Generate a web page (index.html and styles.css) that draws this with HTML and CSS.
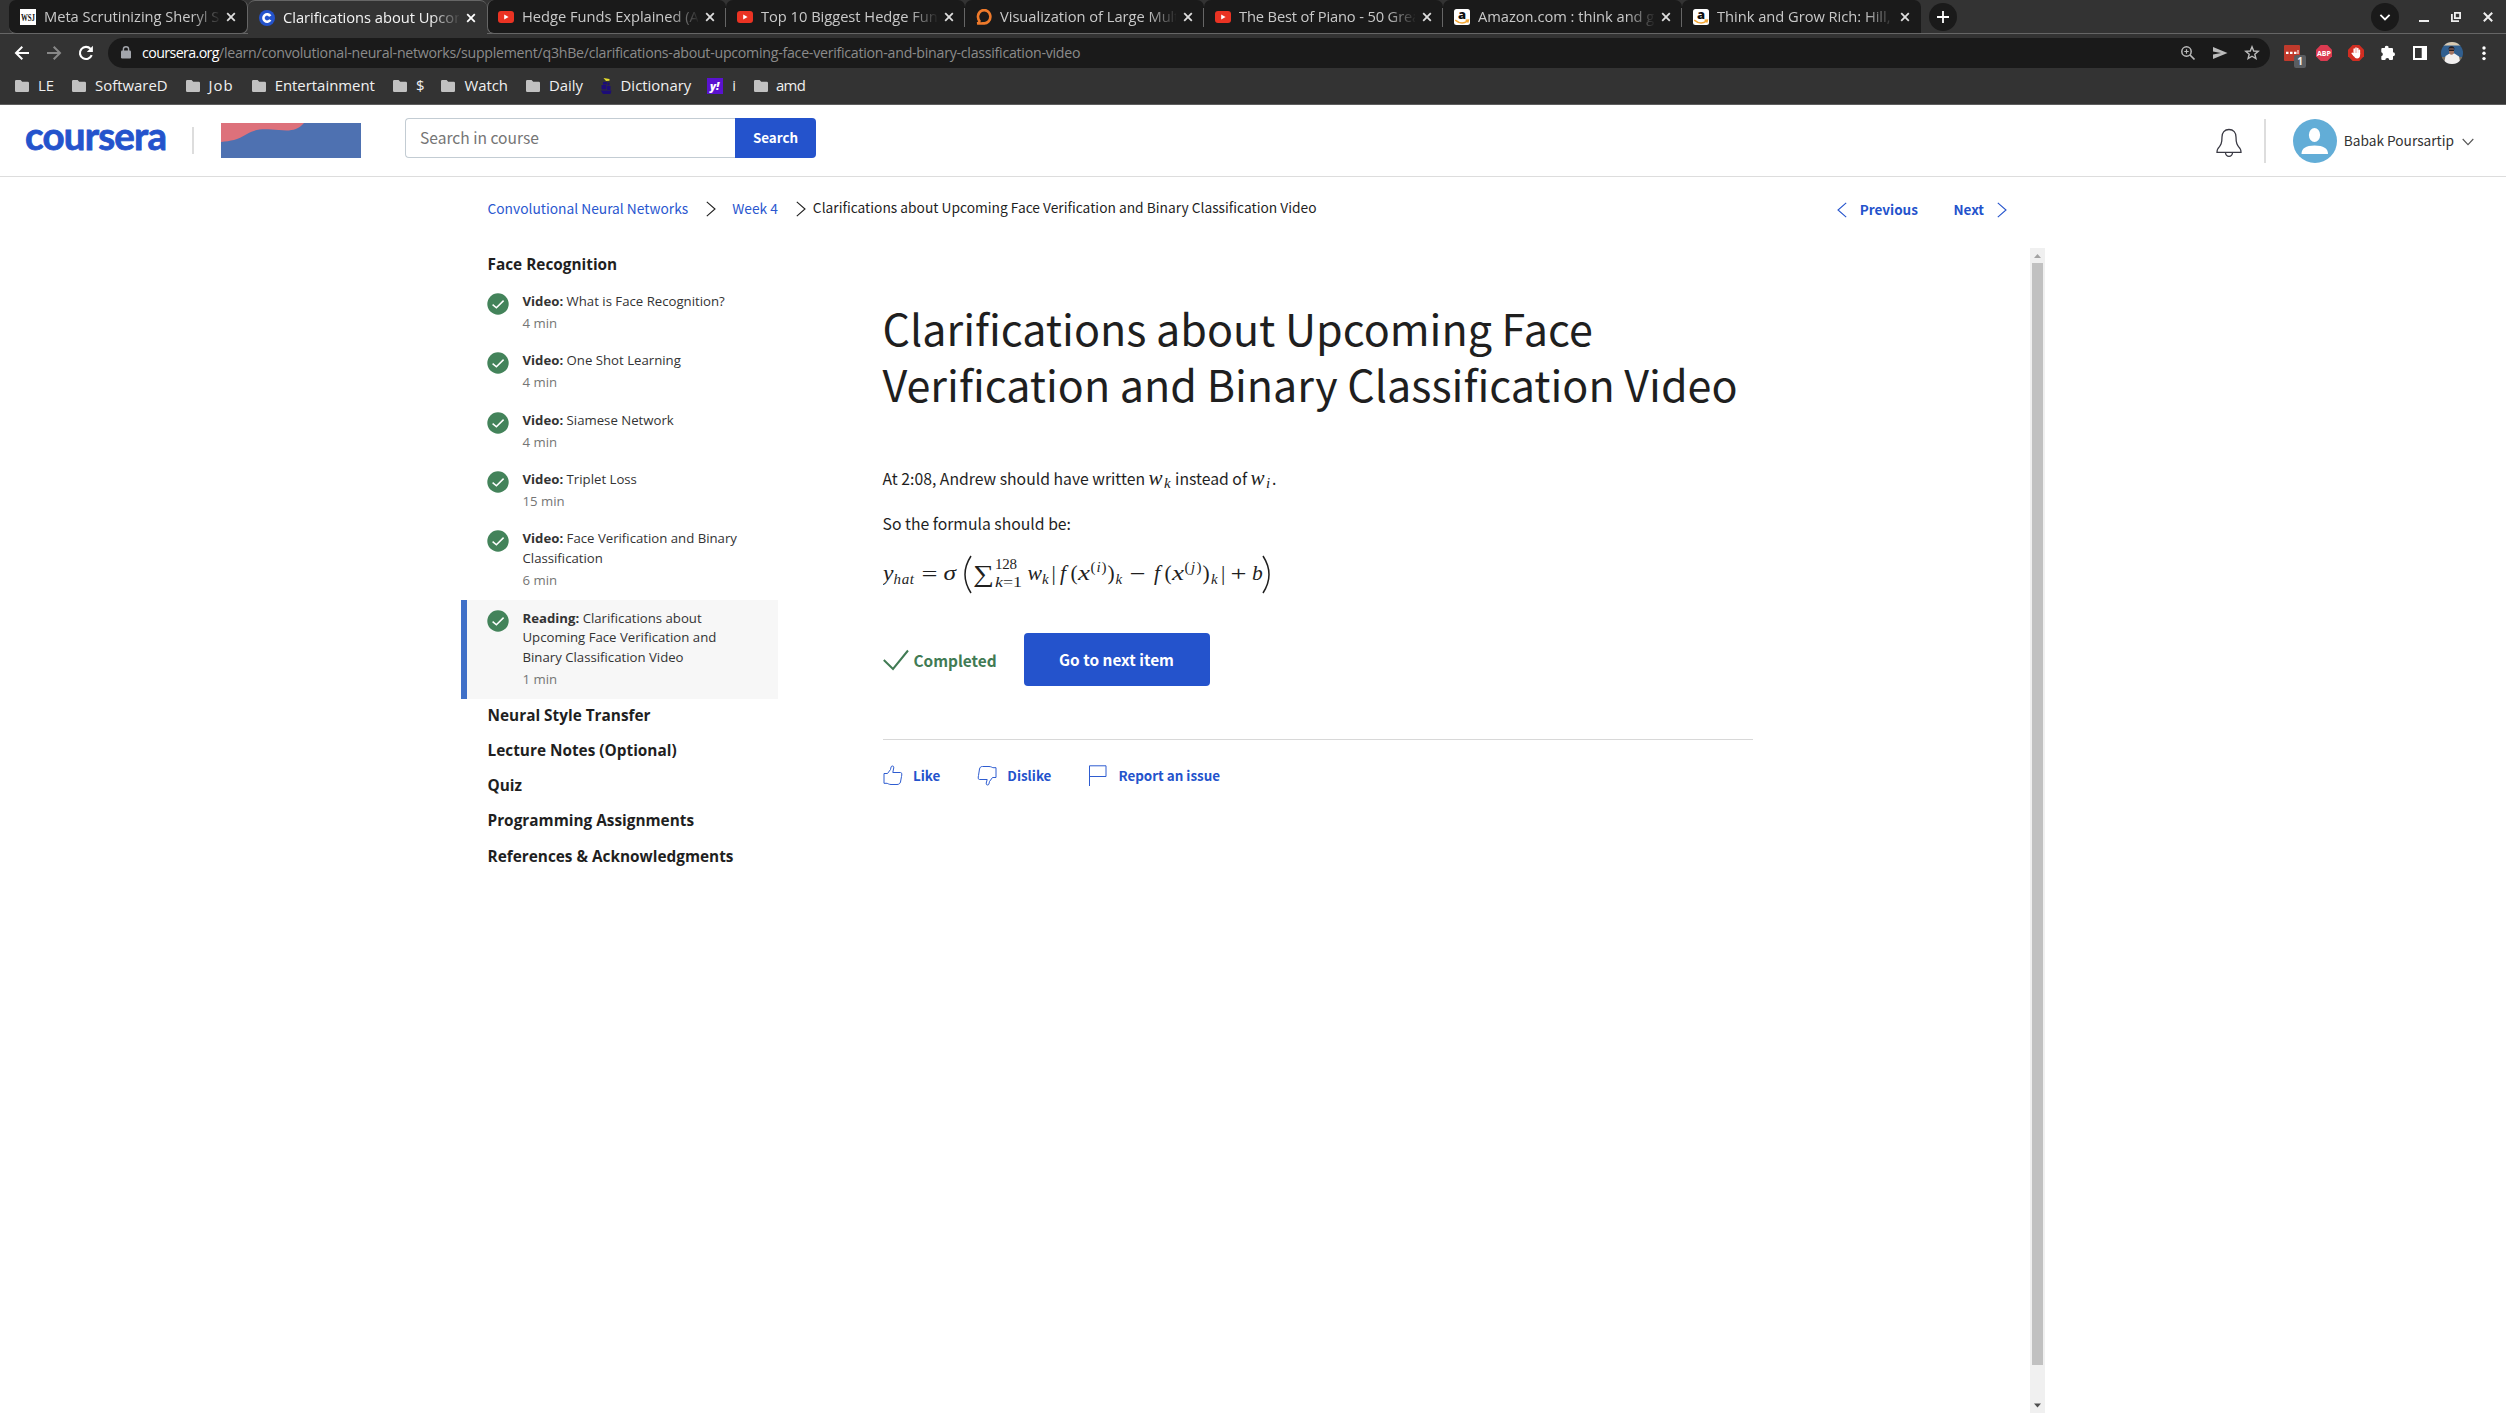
FILE: index.html
```
<!DOCTYPE html>
<html lang="en">
<head>
<meta charset="utf-8">
<title>Clarifications about Upcoming Face Verification and Binary Classification Video | Coursera</title>
<link rel="stylesheet" href="styles.css">
</head>
<body>
<svg class="defs" aria-hidden="true">
  <symbol id="folder" viewBox="0 0 14 12"><path fill="#c1c1c1" d="M1.2 0H5.6L7.2 1.8H12.8Q14 1.8 14 3V10.8Q14 12 12.8 12H1.2Q0 12 0 10.8V1.2Q0 0 1.2 0Z"/></symbol>
  <symbol id="close" viewBox="0 0 10 10"><path fill="none" stroke="currentColor" stroke-width="1.8" d="M1.2 1.2 8.8 8.8M8.8 1.2 1.2 8.8"/></symbol>
  <symbol id="youtube" viewBox="0 0 16 16"><rect y="2" width="16" height="12" rx="3" fill="#ea3323"/><path fill="#fff" d="M6.2 5.6 10.6 8 6.2 10.4Z"/></symbol>
  <symbol id="amazon" viewBox="0 0 16 16"><rect width="16" height="16" rx="2.5" fill="#fff"/><text x="8" y="10" text-anchor="middle" font-family="Open Sans, sans-serif" font-weight="800" font-size="13" fill="#111">a</text><path fill="none" stroke="#f4a837" stroke-width="1.5" d="M1.2 11.2Q7.6 16.4 13.4 12.2M11.6 11.2 14.4 11 13.8 13.6"/></symbol>
  <symbol id="done" viewBox="0 0 22 22"><circle cx="11" cy="11" r="10.7" fill="#43835a"/><path fill="none" stroke="#fff" stroke-width="1.5" d="M5.6 11.6 9.4 14.8 16.6 7.6"/></symbol>
  <symbol id="right" viewBox="0 0 10 16"><path fill="none" stroke="currentColor" stroke-width="1.1" d="M.8.8 9 8 .8 15.2"/></symbol>
  <symbol id="left" viewBox="0 0 10 16"><path fill="none" stroke="currentColor" stroke-width="1.1" d="M9.2.8 1 8 9.2 15.2"/></symbol>
</svg>

<header class="browser">
  <div class="tabstrip">
    <div class="tab tab-before"><svg class="favicon" viewBox="0 0 16 16"><rect width="16" height="16" fill="#fff"/><text x="8" y="12" text-anchor="middle" textLength="14" lengthAdjust="spacingAndGlyphs" font-family="Liberation Serif, serif" font-weight="700" font-size="11" fill="#111">WSJ</text></svg><span class="tab-title">Meta Scrutinizing Sheryl Sandberg</span><svg class="tab-close"><use href="#close"/></svg></div>
    <div class="tab tab-active"><svg class="favicon" viewBox="0 0 16 16"><circle cx="8" cy="8" r="8" fill="#2453cc"/><path fill="none" stroke="#fff" stroke-width="2.6" d="M11.3 6.1A3.7 3.7 0 1 0 11.3 9.9"/></svg><span class="tab-title">Clarifications about Upcoming</span><svg class="tab-close"><use href="#close"/></svg></div>
    <div class="tab tab-after"><svg class="favicon"><use href="#youtube"/></svg><span class="tab-title">Hedge Funds Explained (A Beginner</span><svg class="tab-close"><use href="#close"/></svg></div>
    <div class="tab"><svg class="favicon"><use href="#youtube"/></svg><span class="tab-title">Top 10 Biggest Hedge Funds in the</span><svg class="tab-close"><use href="#close"/></svg></div>
    <div class="tab"><svg class="favicon" viewBox="0 0 16 16"><path fill="none" stroke="#ee7a2b" stroke-width="2.6" d="M4 12.6A6.2 6.6 0 1 1 7 14.2Q4 14.6 1.2 14.4Q3.2 13.8 3.6 12"/></svg><span class="tab-title">Visualization of Large Multiway</span><svg class="tab-close"><use href="#close"/></svg></div>
    <div class="tab"><svg class="favicon"><use href="#youtube"/></svg><span class="tab-title tab-title-tight">The Best of Piano - 50 Greatest</span><svg class="tab-close"><use href="#close"/></svg></div>
    <div class="tab"><svg class="favicon"><use href="#amazon"/></svg><span class="tab-title">Amazon.com : think and grow</span><svg class="tab-close"><use href="#close"/></svg></div>
    <div class="tab tab-last"><svg class="favicon"><use href="#amazon"/></svg><span class="tab-title">Think and Grow Rich: Hill, Napoleon</span><svg class="tab-close"><use href="#close"/></svg></div>
    <svg class="round-button" viewBox="0 0 28 28"><circle cx="14" cy="14" r="14" fill="#1a1a1a"/><path stroke="#fff" stroke-width="1.8" d="M14 8V20M8 14H20"/></svg>
    <div class="window-controls">
      <svg class="round-button" viewBox="0 0 28 28"><circle cx="14" cy="14" r="14" fill="#1a1a1a"/><path fill="none" stroke="#fff" stroke-width="1.8" d="M9.4 11.8 14 16.4 18.6 11.8"/></svg>
      <svg class="window-icon" viewBox="0 0 10 10"><path fill="#eee" d="M0 8H10V10H0Z"/></svg>
      <svg class="window-icon" viewBox="0 0 10 10"><path fill="none" stroke="#eee" stroke-width="1.8" d="M3.9.9H9.1V6.1H3.9ZM.9 2V9.1H8"/></svg>
      <svg class="window-icon" viewBox="0 0 10 10"><path fill="none" stroke="#eee" stroke-width="2" d="M.8.8 9.2 9.2M9.2.8.8 9.2"/></svg>
    </div>
  </div>

  <div class="toolbar">
    <div class="nav-buttons">
      <svg viewBox="0 0 16 16"><path fill="none" stroke="#fff" stroke-width="2" d="M15 8H2.5M8.3 1.8 2 8 8.3 14.2"/></svg>
      <svg viewBox="0 0 16 16"><path fill="none" stroke="#888" stroke-width="2" d="M1 8H13.5M7.7 1.8 14 8 7.7 14.2"/></svg>
      <svg viewBox="0 0 16 16"><path fill="none" stroke="#fff" stroke-width="2.1" d="M13.7 10.2A6.1 6.1 0 1 1 12.6 3.9"/><path fill="#fff" d="M14.9.8V6.9H8.8Z"/></svg>
    </div>
    <div class="omnibox">
      <svg class="lock" viewBox="0 0 10 13"><rect y="4.5" width="10" height="8" rx="1.2" fill="#a3a6ac"/><path fill="none" stroke="#a3a6ac" stroke-width="1.4" d="M2.4 5V3A2.6 2.3 0 0 1 7.6 3V5"/></svg>
      <span class="url"><span class="url-host">coursera.org</span><span class="url-path">/learn/convolutional-neural-networks/supplement/q3hBe/clarifications-about-upcoming-face-verification-and-binary-classification-video</span></span>
      <div class="omnibox-actions">
        <svg viewBox="0 0 16 16"><circle cx="6.5" cy="6.5" r="4.7" fill="none" stroke="#bbb" stroke-width="1.5"/><path fill="none" stroke="#bbb" stroke-width="1.7" d="M10 10 14.5 14.5"/><path stroke="#bbb" stroke-width="1.2" d="M6.5 4.3V8.7M4.3 6.5H8.7"/></svg>
        <svg viewBox="0 0 16 16"><path fill="#bbb" d="M1 2 15.5 8 1 14V9.4L9 8 1 6.6Z"/></svg>
        <svg viewBox="0 0 16 16"><path fill="none" stroke="#bbb" stroke-width="1.4" d="M8 1.8 9.7 6 14.2 6.3 10.8 9.2 11.9 13.6 8 11.2 4.1 13.6 5.2 9.2 1.8 6.3 6.3 6Z"/></svg>
      </div>
    </div>
    <div class="extensions">
      <div class="ext-badged"><svg viewBox="0 0 16 16"><rect width="16" height="16" rx="1" fill="#c03a2c"/><path fill="#fff" d="M2 6.8H4.5V9H2ZM6 6.8H8.5V9H6ZM10 6.8H12.5V9H10ZM13.5 5H14.5V9H13.5Z"/></svg><span class="ext-count">1</span></div>
      <svg viewBox="0 0 16 16"><path fill="#db3a50" d="M4.7 0H11.3L16 4.7V11.3L11.3 16H4.7L0 11.3V4.7Z"/><text x="8" y="10.7" text-anchor="middle" textLength="14" lengthAdjust="spacingAndGlyphs" font-family="Open Sans, sans-serif" font-size="7.5" font-weight="700" fill="#fff">ABP</text></svg>
      <svg viewBox="0 0 16 16"><path fill="#d12d21" d="M4.7 0H11.3L16 4.7V11.3L11.3 16H4.7L0 11.3V4.7Z"/><path fill="none" stroke="#fff" stroke-width="1.5" stroke-linecap="round" d="M6.2 9V4M8 9V2.9M9.8 9V3.5M11.4 9V5.2M6 10.4 4.2 8.3"/><path fill="#fff" d="M5.4 8H12.1V10Q12.1 13.4 9 13.4Q6.8 13.4 5.4 10.5Z"/></svg>
      <svg viewBox="0 0 16 16"><path fill="#fff" d="M6.7.8A1.9 1.9 0 0 1 8.6 3H12Q13 3 13 4V7.2A2 2 0 0 1 13 11.2V14Q13 15 12 15H9.3A2 2 0 0 0 5.3 15H2.3Q1.3 15 1.3 14V11.2A2 2 0 0 0 1.3 7.3V4Q1.3 3 2.3 3H4.8A1.9 1.9 0 0 1 6.7.8Z"/></svg>
      <svg viewBox="0 0 16 16"><path fill="#fff" fill-rule="evenodd" d="M1 1H15V15H1ZM3 3V13H9.7V3Z"/></svg>
      <svg class="profile" viewBox="0 0 22 22"><clipPath id="round"><circle cx="11" cy="11" r="11"/></clipPath><g clip-path="url(#round)"><path fill="#315f8f" d="M0 0H22V22H0Z"/><path fill="#d9c9b0" d="M0 0H22V3.5H0Z"/><path fill="#7d715f" d="M0 15H22V22H0Z"/><path fill="#f2f0f0" d="M3 22 4.5 14 8.5 11.5H13.5L18 14.5 19.5 22Z"/><ellipse cx="10.5" cy="9" rx="2.6" ry="3.8" fill="#a57562"/><path fill="#241c20" d="M7.5 8Q7.2 4.2 10.5 4.2Q13.8 4.2 13.5 8L12.8 6.5H8.200ZM8 7.5H13V9H8Z"/></g></svg>
      <svg viewBox="0 0 16 16"><g fill="#fff"><circle cx="8" cy="3" r="1.7"/><circle cx="8" cy="8.3" r="1.7"/><circle cx="8" cy="13.6" r="1.7"/></g></svg>
    </div>
  </div>

  <nav class="bookmarks">
    <a><svg class="folder"><use href="#folder"/></svg>LE</a>
    <a><svg class="folder"><use href="#folder"/></svg>SoftwareD</a>
    <a><svg class="folder"><use href="#folder"/></svg><span class="wide">Job</span></a>
    <a><svg class="folder"><use href="#folder"/></svg>Entertainment</a>
    <a><svg class="folder"><use href="#folder"/></svg>$</a>
    <a class="watch"><svg class="folder"><use href="#folder"/></svg>Watch</a>
    <a><svg class="folder"><use href="#folder"/></svg>Daily</a>
    <a class="book"><svg class="ship" viewBox="0 0 12 16"><path fill="#e8df2c" d="M3.500 0 9.500 1V2.800L6 3Z"/><path fill="#1c0c78" d="M3 4H7V6.500H3ZM7.500 4.500H9.500V7.500H7.500ZM1.500 7H6.500V11.500H1.500ZM7 8H10.500V12H7ZM.8 12.500H11.500L10.500 16H3Z"/></svg>Dictionary</a>
    <a class="yahoo"><svg class="favicon" viewBox="0 0 16 16"><rect width="16" height="16" fill="#5a12d0"/><text x="7.600" y="11.500" text-anchor="middle" font-family="Open Sans, sans-serif" font-style="italic" font-weight="800" font-size="11" fill="#fff">y!</text></svg>i</a>
    <a><svg class="folder"><use href="#folder"/></svg><span class="tight">amd</span></a>
  </nav>
</header>

<header class="site-header">
  <svg class="logo" viewBox="0 0 142 30"><text x="0" y="25" textLength="142" lengthAdjust="spacing" font-family="Lato, sans-serif" font-weight="700" font-size="38.5" fill="#2453cc" stroke="#2453cc" stroke-width=".8">coursera</text></svg>
  <span class="logo-divider"></span>
  <svg class="partner" viewBox="0 0 140 35"><rect width="140" height="35" fill="#4e71b1"/><path fill="#dd717b" d="M0 0H83C76 8 68 8 58 7C44 6 36 5 26 11C16 17 10 18 0 19Z"/></svg>
  <form class="search"><span class="search-input">Search in course</span><span class="search-button">Search</span></form>
  <div class="account">
    <svg class="bell" viewBox="0 0 26 30"><path fill="none" stroke="#3a3a44" stroke-width="1.3" d="M13 1.5C17.5 1.5 20 4.8 20 9C20 15 21 17 24 20.5C25 22 25 23 25 24.3H1C1 23 1 22 2 20.5C5 17 6 15 6 9C6 4.8 8.5 1.5 13 1.5ZM9.5 24.5A3.5 3.8 0 0 0 16.5 24.5"/></svg>
    <span class="account-divider"></span>
    <svg class="avatar" viewBox="0 0 44 44"><circle cx="22" cy="22" r="22" fill="#62add7"/><ellipse cx="21.5" cy="16" rx="5.6" ry="7" fill="#fff"/><path fill="#fff" d="M8.5 35Q8.5 26.5 21.5 26.5Q35 26.5 35 35Z"/></svg>
    <span class="account-name">Babak Poursartip</span>
    <svg class="caret" viewBox="0 0 12 8"><path fill="none" stroke="#555" stroke-width="1.1" d="M.7 1 6 6.6 11.3 1"/></svg>
  </div>
</header>

<main class="course">
  <div class="crumbs">
    <a>Convolutional Neural Networks</a>
    <svg class="arrow crumb-arrow"><use href="#right"/></svg>
    <a>Week 4</a>
    <svg class="arrow crumb-arrow-last"><use href="#right"/></svg>
    <span class="crumb-current">Clarifications about Upcoming Face Verification and Binary Classification Video</span>
    <div class="pager"><svg class="arrow"><use href="#left"/></svg><b class="prev">Previous</b><b class="next">Next</b><svg class="arrow"><use href="#right"/></svg></div>
  </div>

  <div class="columns">
    <aside class="outline">
      <h2 class="first">Face Recognition</h2>
      <div class="item"><svg><use href="#done"/></svg><div><p><b>Video:</b> What is Face Recognition?</p><small>4 min</small></div></div>
      <div class="item"><svg><use href="#done"/></svg><div><p><b>Video:</b> One Shot Learning</p><small>4 min</small></div></div>
      <div class="item"><svg><use href="#done"/></svg><div><p><b>Video:</b> Siamese Network</p><small>4 min</small></div></div>
      <div class="item"><svg><use href="#done"/></svg><div><p><b>Video:</b> Triplet Loss</p><small>15 min</small></div></div>
      <div class="item"><svg><use href="#done"/></svg><div><p><b>Video:</b> Face Verification and Binary<br>Classification</p><small>6 min</small></div></div>
      <div class="item current"><svg><use href="#done"/></svg><div><p><b>Reading:</b> Clarifications about<br>Upcoming Face Verification and<br>Binary Classification Video</p><small>1 min</small></div></div>
      <h2>Neural Style Transfer</h2>
      <h2>Lecture Notes (Optional)</h2>
      <h2>Quiz</h2>
      <h2>Programming Assignments</h2>
      <h2>References &amp; Acknowledgments</h2>
    </aside>

    <article class="reading">
      <h1>Clarifications about Upcoming Face<br>Verification and Binary Classification Video</h1>
      <p class="text">At 2:08, Andrew should have written <i class="var">w</i><i class="sub">k</i> instead of <i class="var">w</i><i class="sub sub-i">i</i>.</p>
      <p class="text">So the formula should be:</p>
      <svg class="formula" viewBox="0 0 392 44">
        <g class="math">
          <text x="0" y="26" textLength="10.5" lengthAdjust="spacingAndGlyphs" class="it">y</text>
          <text x="10.5" y="29.5" textLength="20.5" class="it small">hat</text>
          <text x="38.5" y="27" textLength="16" lengthAdjust="spacingAndGlyphs">=</text>
          <text x="60.5" y="26" textLength="12.5" lengthAdjust="spacingAndGlyphs" class="it">σ</text>
          <text x="90" y="27.5" textLength="21" lengthAdjust="spacingAndGlyphs" class="sum">∑</text>
          <text x="112" y="14.5" textLength="22" class="small">128</text>
          <text x="112" y="32.5" textLength="27" lengthAdjust="spacingAndGlyphs" class="small"><tspan class="it">k</tspan>=1</text>
          <text x="144.5" y="26" textLength="14.5" lengthAdjust="spacingAndGlyphs" class="it">w</text>
          <text x="159" y="29.5" class="it small">k</text>
          <text x="168.5" y="26">|</text>
          <text x="177" y="26" class="it">f</text>
          <text x="187.5" y="26">(</text>
          <text x="195" y="26" textLength="12" lengthAdjust="spacingAndGlyphs" class="it">x</text>
          <text x="207.5" y="18" textLength="16" class="small">(<tspan class="it">i</tspan>)</text>
          <text x="224.5" y="26">)</text>
          <text x="232.5" y="29.5" class="it small">k</text>
          <text x="246.5" y="27" textLength="16" lengthAdjust="spacingAndGlyphs">−</text>
          <text x="271" y="26" class="it">f</text>
          <text x="281.5" y="26">(</text>
          <text x="289" y="26" textLength="12" lengthAdjust="spacingAndGlyphs" class="it">x</text>
          <text x="301.5" y="18" textLength="17" class="small">(<tspan class="it">j</tspan>)</text>
          <text x="319.5" y="26">)</text>
          <text x="328" y="29.5" class="it small">k</text>
          <text x="338" y="26">|</text>
          <text x="347.5" y="27" textLength="16" lengthAdjust="spacingAndGlyphs">+</text>
          <text x="369" y="26" class="it">b</text>
        </g>
        <path fill="none" stroke="#1f1f1f" stroke-width="1.5" d="M88 2Q76 20.5 88 39M380 2Q392 20.5 380 39"/>
      </svg>
      <div class="actions">
        <svg class="check" viewBox="0 0 26 22"><path fill="none" stroke="#417b54" stroke-width="2" d="M.8 11 10 20 25 1.5"/></svg>
        <span class="completed">Completed</span>
        <span class="next-item">Go to next item</span>
      </div>
      <div class="feedback">
        <a class="like"><svg viewBox="0 0 20 21"><path d="M1 8.5H4.5L7.5 4.5C8 2.5 8 1 9.3 1C11 1 11 2.5 10.5 4L9.8 7.5H17.5C19 7.5 19 9.5 18.5 11.5L17.5 17C17 18.5 16 19.5 14 19.5H8C6 19.5 5 18.5 4 18.3H1Z"/></svg>Like</a>
        <a class="dislike"><svg viewBox="0 0 20 21"><path d="M19 12.5H15.5L12.5 16.5C12 18.5 12 20 10.7 20C9 20 9 18.5 9.5 17L10.2 14.5H2.5C1 14.5 1 12.5 1.5 10.5L2.5 4C3 2.5 3.5 1.5 5.5 1.5H12C14 1.5 15 2.5 16 2.7H19Z"/></svg>Dislike</a>
        <a class="report"><svg viewBox="0 0 20 21"><path d="M1.5 21V.8H18V11.5H1.5"/></svg>Report an issue</a>
      </div>
    </article>

    <div class="scrollbar"><svg viewBox="0 0 15 15"><path fill="#a3a3a3" d="M4 10 7.5 6 11 10Z"/></svg><span class="thumb"></span><svg viewBox="0 0 15 15"><path fill="#505050" d="M4 5.5 7.5 9.500 11 5.5Z"/></svg></div>
  </div>
</main>
</body>
</html>
```
FILE: styles.css
```
* { box-sizing: border-box; }

body {
  margin: 0;
  width: 2506px;
  height: 1413px;
  display: flex;
  flex-direction: column;
  overflow: hidden;
  background: #fff;
  color: #1f1f1f;
  font-family: "Noto Sans CJK SC", "Noto Sans", sans-serif;
  white-space: nowrap;
}
svg { display: block; flex: none; }
p, h1, h2 { margin: 0; }
.defs { position: absolute; width: 0; height: 0; }

/* Browser window */
.browser {
  height: 105px;
  flex: none;
  background: #333;
  border-bottom: 1px solid #5e5e5e;
  color: #f0f0f0;
  font-family: "Open Sans", "Noto Sans", sans-serif;
}
.tabstrip {
  display: flex;
  align-items: flex-start;
  height: 34px;
  padding-left: 9px;
  background: linear-gradient(#666, #666) left bottom / 100% 1px no-repeat;
}
.tab {
  display: flex;
  align-items: center;
  width: 239px;
  height: 33px;
  padding: 0 11px;
  background: linear-gradient(#666, #666) right 8px / 1px 19px no-repeat #1a1a1a;
  border-radius: 7px 7px 0 0;
  color: #c9c9c9;
}
.tab-before { height: 34px; background: #1a1a1a; border-radius: 7px; border-right: 1px solid #666; border-bottom: 1px solid #666; }
.tab-active { height: 34px; background: #333; border-top: 1px solid #666; color: #f4f4f4; }
.tab-after { height: 34px; border-left: 1px solid #666; border-bottom: 1px solid #666; border-bottom-left-radius: 7px; padding-left: 10px; }
.tab-last { background: #1a1a1a; }
.favicon { width: 16px; height: 16px; }
.tab-title {
  width: 176px;
  margin-left: 8px;
  overflow: hidden;
  font-size: 14.7px;
  line-height: 33px;
  letter-spacing: -.03px;
  -webkit-mask-image: linear-gradient(90deg, #000 148px, transparent 178px);
  mask-image: linear-gradient(90deg, #000 148px, transparent 178px);
}
.tab-title-tight { letter-spacing: -.15px; }
.tab-close { width: 10px; height: 10px; margin-left: 7px; color: #ddd; }
.tab-active .tab-close { color: #fff; }
.round-button { width: 28px; height: 28px; margin-top: 3px; }
.tab-last + .round-button { margin-left: 8px; }
.window-controls { display: flex; align-items: center; margin: 0 13px 0 auto; }
.window-icon { width: 10px; height: 10px; margin: 3px 0 0 22px; }
.window-controls .round-button + .window-icon { margin-left: 20px; }

.toolbar { display: flex; align-items: center; height: 38px; }
.nav-buttons { display: flex; gap: 16px; margin-left: 14px; width: 94px; }
.nav-buttons svg { width: 16px; height: 16px; }
.omnibox {
  display: flex;
  align-items: center;
  width: 2162px;
  height: 30px;
  padding: 0 10px 0 13px;
  border-radius: 15px;
  background: #1a1a1a;
}
.lock { width: 10px; height: 13px; margin: 0 11px 2px 0; }
.url { font-size: 14.2px; line-height: 30px; }
.url-host { letter-spacing: -.59px; color: #fff; }
.url-path { letter-spacing: -.265px; color: #8b8b8b; }
.omnibox-actions { display: flex; gap: 16px; margin-left: auto; }
.omnibox-actions svg { width: 16px; height: 16px; }
.extensions { display: flex; align-items: center; gap: 16px; margin-left: 14px; }
.extensions svg { width: 16px; height: 16px; }
.extensions .profile { width: 22px; height: 22px; margin: 0 -3px; }
.ext-badged { position: relative; }
.ext-count {
  position: absolute;
  left: 10px;
  top: 10px;
  width: 12px;
  height: 13px;
  border-radius: 2px;
  background: #5a5d61;
  font-size: 10px;
  font-weight: 700;
  line-height: 13px;
  text-align: center;
}
.bookmarks {
  display: flex;
  align-items: center;
  height: 27px;
  padding-left: 15px;
  gap: 18px;
  font-size: 14.9px;
}
.bookmarks a { display: flex; align-items: center; gap: 9px; line-height: 27px; }
.folder { width: 14px; height: 12px; margin-top: 1px; }
.ship { width: 12px; height: 16px; }
.watch { margin-left: -1px; }
.book { margin-left: -1.5px; }
.yahoo { margin-left: -2px; }
.wide { letter-spacing: 1px; }
.tight { margin-left: -1px; letter-spacing: -.7px; }

/* Site header */
.site-header {
  display: flex;
  height: 72px;
  flex: none;
  padding: 0 32px 0 25px;
  border-bottom: 1px solid #ddd;
}
.logo { width: 142px; height: 30px; margin-top: 20px; }
.logo-divider { width: 2px; height: 27px; margin: 22px 0 0 25px; background: #ddd; }
.partner { width: 140px; height: 35px; margin: 18px 0 0 27px; }
.search { display: flex; margin: 13px 0 0 44px; }
.search-input {
  width: 330px;
  height: 40px;
  padding-left: 14px;
  border: 1px solid #c3ccd3;
  border-right: 0;
  border-radius: 4px 0 0 4px;
  color: #757575;
  font-size: 15.6px;
  line-height: 36px;
}
.search-button {
  width: 81px;
  height: 40px;
  border-radius: 0 4px 4px 0;
  background: #2453cc;
  color: #fff;
  font-size: 13.4px;
  font-weight: 700;
  line-height: 38px;
  text-align: center;
}
.account { display: flex; margin-left: auto; }
.bell { width: 26px; height: 30px; margin-top: 23px; }
.account-divider { width: 2px; height: 44px; margin: 14px 27px 0 22px; background: #ddd; }
.avatar { width: 44px; height: 44px; margin-top: 14px; }
.account-name { margin-left: 7px; font-size: 13.7px; line-height: 71px; color: #333; }
.caret { width: 12px; height: 8px; margin: 33px 0 0 8px; }

/* Course */
.course { display: flex; flex-direction: column; flex: 1; width: 1584px; margin-left: 461px; }
.crumbs { display: flex; align-items: center; height: 71px; padding: 0 38px 8px 26.5px; font-size: 13.77px; line-height: 20px; }
.crumbs a { padding-bottom: 1px; color: #2a57cf; }
.crumb-current { padding-bottom: 3px; }
.arrow { width: 10px; height: 16px; }
.crumb-arrow { margin: 0 16.5px 0 17.5px; }
.crumb-arrow-last { margin: 0 7px 0 18px; }
.pager { display: flex; align-items: center; margin-left: auto; color: #2453cc; font-size: 13.5px; }
.pager svg { margin-top: 2px; }
.prev { margin: 0 35.5px 0 13px; }
.next { margin-right: 13px; }
.columns { display: flex; flex: 1; }

.outline { width: 317px; font-family: "Open Sans", sans-serif; }
.outline h2 {
  height: 35.2px;
  padding-left: 26.5px;
  font-size: 15.37px;
  font-weight: 700;
  line-height: 34px;
}
.item { display: flex; gap: 13.5px; padding: 8.8px 0 8.8px 26px; font-size: 13.2px; line-height: 19.8px; color: #333; }
.item svg { width: 22px; height: 22px; margin-top: 1px; }
.item p { padding-bottom: 2.2px; }
.item small { display: block; font-size: 13.2px; color: #757575; }
.current { padding-left: 20px; border-left: 6px solid #3f70c8; background: #f7f7f7; }

.reading { width: 870px; margin-left: 104.5px; }
h1 { margin-top: 51px; font-size: 43.05px; font-weight: 400; line-height: 56px; }
.text { font-size: 15.75px; line-height: 25px; padding-bottom: 20px; }
h1 + .text { margin-top: 55px; }
.var { display: inline-block; width: 15.5px; font-family: "Liberation Serif", serif; font-size: 21px; line-height: 20px; }
.sub { display: inline-block; width: 7.5px; font-family: "Liberation Serif", serif; font-size: 15px; line-height: 14px; vertical-align: -3px; }
.sub-i { width: 6px; }
.formula { width: 392px; height: 44px; margin-top: -2px; }
.math { font-family: "Liberation Serif", serif; font-size: 21.5px; fill: #1f1f1f; }
.it { font-style: italic; }
.small { font-size: 15px; }
.sum { font-size: 24px; }
.actions { display: flex; align-items: center; height: 53px; margin-top: 35px; }
.check { width: 26px; height: 22px; }
.completed { width: 110px; margin-left: 5px; color: #417b54; font-size: 15.4px; font-weight: 700; }
.next-item {
  width: 186px;
  height: 53px;
  border-radius: 4px;
  background: #2453cc;
  color: #fff;
  font-size: 15.4px;
  font-weight: 700;
  line-height: 52px;
  text-align: center;
}
.feedback {
  display: flex;
  margin-top: 53px;
  padding-top: 25px;
  border-top: 1px solid #d8d8d8;
  color: #2453cc;
  font-size: 13.42px;
  font-weight: 700;
  line-height: 21px;
}
.feedback a { display: flex; gap: 10.5px; }
.feedback svg { width: 20px; height: 21px; fill: none; stroke: #2e5cd0; stroke-width: 1; }
.dislike { margin-left: 36.5px; }
.report { margin-left: 36.5px; }

.scrollbar { display: flex; flex-direction: column; width: 15px; height: 1165px; margin-left: 277.5px; background: #f0f0f0; }
.scrollbar svg { width: 15px; height: 15px; }
.thumb { width: 11px; height: 1102px; margin: 0 2px 33px; background: #c1c1c1; }
```
